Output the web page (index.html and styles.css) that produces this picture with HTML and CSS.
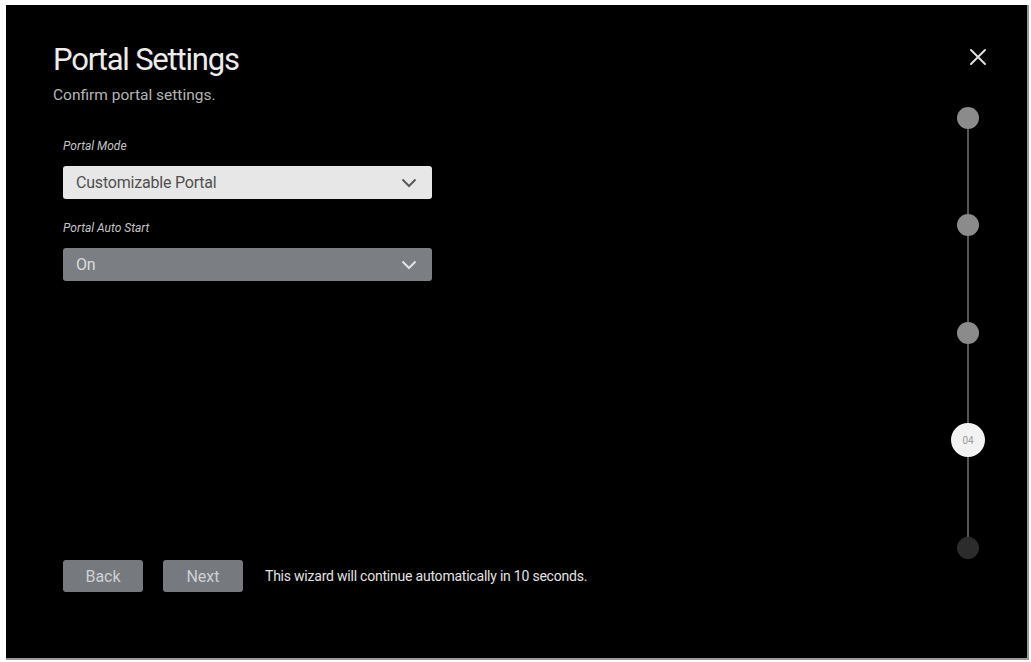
FILE: index.html
```html
<!DOCTYPE html>
<html lang="en">
<head>
    <meta charset="UTF-8">
    <meta name="viewport" content="width=device-width, initial-scale=1.0">
    <title>Portal Settings</title>
    <link rel="stylesheet" href="styles.css">
</head>
<body>
    <div class="screen">
        <div class="content">
            <h1 class="title">Portal Settings</h1>
            <p class="subtitle">Confirm portal settings.</p>

            <div class="form">
                <label class="field-label">Portal Mode</label>
                <div class="select select-light">
                    <span>Customizable Portal</span>
                    <svg class="chevron" width="16" height="10" viewBox="0 0 16 10"><polyline points="1.5,1.5 8,8 14.5,1.5" fill="none" stroke="currentColor" stroke-width="2"/></svg>
                </div>

                <label class="field-label">Portal Auto Start</label>
                <div class="select select-dark">
                    <span>On</span>
                    <svg class="chevron" width="16" height="10" viewBox="0 0 16 10"><polyline points="1.5,1.5 8,8 14.5,1.5" fill="none" stroke="currentColor" stroke-width="2"/></svg>
                </div>
            </div>

            <div class="footer">
                <button class="btn">Back</button>
                <button class="btn">Next</button>
                <span class="notice">This wizard will continue automatically in 10 seconds.</span>
            </div>
        </div>

        <div class="aside">
            <button class="close" aria-label="Close">
                <svg width="18" height="18" viewBox="0 0 18 18"><path d="M2 2 L16 16 M16 2 L2 16" stroke="currentColor" stroke-width="2" stroke-linecap="round"/></svg>
            </button>
            <div class="stepper">
                <div class="step"><span class="dot done"></span></div>
                <div class="step"><span class="dot done"></span></div>
                <div class="step"><span class="dot done"></span></div>
                <div class="step"><span class="dot current">04</span></div>
                <div class="step"><span class="dot todo"></span></div>
            </div>
        </div>
    </div>
</body>
</html>
```

FILE: styles.css
```css
body {
    margin: 0;
    background-color: #fff;
    font-family: Roboto, "Open Sans", sans-serif;
}
.screen {
    display: flex;
    width: 1023px;
    height: 655px;
    margin: 5px 0 0 6px;
    background-color: #000;
    border-right: 2px solid #9a9a9a;
    border-bottom: 2px solid #9a9a9a;
    box-sizing: border-box;
}
.content {
    flex: 1;
    display: flex;
    flex-direction: column;
    padding: 36px 0 66px 47px;
}
.title {
    margin: 0;
    font-size: 31px;
    font-weight: 400;
    line-height: 38px;
    color: #ececec;
    letter-spacing: -1.2px;
}
.subtitle {
    margin: 7px 0 0;
    font-size: 15.5px;
    line-height: 18px;
    color: #b4b4b4;
}
.form {
    display: flex;
    flex-direction: column;
    width: 369px;
    padding-left: 10px;
    margin-top: 14px;
}
.field-label {
    font-size: 12px;
    font-style: italic;
    line-height: 14px;
    color: #c4c4c4;
    margin-top: 21px;
    margin-bottom: 13px;
}
.field-label + .select {
    margin-bottom: 1px;
}
.select {
    display: flex;
    align-items: center;
    justify-content: space-between;
    height: 33px;
    padding: 0 15px 0 13px;
    border-radius: 3px;
    font-size: 16px;
    letter-spacing: -0.2px;
}
.select-light {
    background-color: #e7e7e7;
    color: #505050;
}
.select-dark {
    background-color: #7b7e83;
    color: #dcdcdc;
}
.select-light .chevron {
    color: #5a5a5a;
}
.select-dark .chevron {
    color: #e4e4e4;
}
.footer {
    margin-top: auto;
    display: flex;
    align-items: center;
    padding-left: 10px;
}
.btn {
    width: 80px;
    height: 32px;
    margin-right: 20px;
    border: none;
    border-radius: 3px;
    background-color: #76797e;
    color: #cfd0d3;
    font-family: inherit;
    font-size: 16px;
    padding: 0;
}
.btn + .btn {
    margin-right: 22px;
}
.notice {
    font-size: 14px;
    color: #e2e2e2;
    letter-spacing: -0.22px;
}
.aside {
    width: 60px;
    margin-right: 29px;
    display: flex;
    flex-direction: column;
    padding-top: 43px;
}
.close {
    align-self: flex-end;
    margin-right: 11px;
    width: 18px;
    height: 18px;
    padding: 0;
    border: none;
    background: none;
    color: #dedede;
}
.close svg {
    display: block;
}
.stepper {
    position: relative;
    display: grid;
    grid-auto-rows: 107.5px;
    margin-top: -2px;
}
.stepper::before {
    content: "";
    position: absolute;
    left: 29px;
    top: 54px;
    bottom: 54px;
    width: 2px;
    background-color: #555;
}
.step {
    display: flex;
    align-items: center;
    justify-content: center;
    position: relative;
}
.dot {
    width: 22px;
    height: 22px;
    border-radius: 50%;
}
.dot.done {
    background-color: #8b8b8b;
}
.dot.todo {
    background-color: #2c2c2c;
}
.dot.current {
    width: 34px;
    height: 34px;
    background-color: #f2f2f2;
    color: #9a9a9a;
    font-size: 10px;
    display: flex;
    align-items: center;
    justify-content: center;
}
```
